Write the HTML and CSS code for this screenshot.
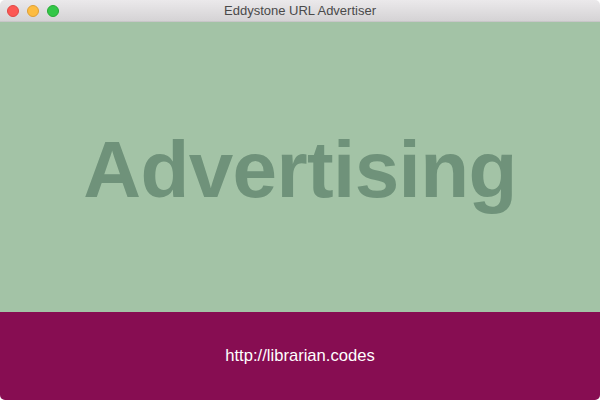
FILE: index.html
```html
<!DOCTYPE html>
<html>
<head>
<meta charset="utf-8">
<link rel="stylesheet" href="styles.css">
</head>
<body>
<div class="window">
  <div class="titlebar">
    <div class="lights">
      <span class="light close"></span>
      <span class="light min"></span>
      <span class="light max"></span>
    </div>
    <div class="title">Eddystone URL Advertiser</div>
  </div>
  <div class="status">
    <div class="status-text">Advertising</div>
  </div>
  <div class="footer">
    <div class="url">http://librarian.codes</div>
  </div>
</div>
</body>
</html>
```

FILE: styles.css
```css
html, body {
  margin: 0;
  padding: 0;
  background: #ffffff;
}
.window {
  width: 600px;
  height: 400px;
  display: flex;
  flex-direction: column;
  border-radius: 5px;
  overflow: hidden;
  font-family: "Liberation Sans", Arial, sans-serif;
}
.titlebar {
  height: 22px;
  flex: none;
  background: linear-gradient(#ebe9eb, #d5d3d5);
  border-bottom: 1px solid #c8c6c8;
  box-sizing: border-box;
  display: grid;
  grid-template-columns: 1fr;
  align-items: center;
  position: relative;
}
.lights {
  position: absolute;
  left: 7px;
  top: 5px;
  display: flex;
  gap: 8px;
}
.light {
  width: 12px;
  height: 12px;
  border-radius: 50%;
  box-sizing: border-box;
}
.close { background: #fc5753; border: 0.5px solid #df4744; }
.min { background: #fdbc40; border: 0.5px solid #de9f34; }
.max { background: #33c748; border: 0.5px solid #27aa35; }
.title {
  text-align: center;
  font-size: 13px;
  color: #4a4a4a;
  line-height: 21px;
  font-family: "Liberation Sans", Arial, sans-serif;
}
.status {
  flex: 1;
  background: #a3c3a6;
  display: flex;
  align-items: center;
  justify-content: center;
}
.status-text {
  font-size: 80px;
  font-weight: bold;
  letter-spacing: -0.6px;
  color: #6f927a;
  line-height: 1;
  margin-top: 6px;
}
.footer {
  height: 88px;
  flex: none;
  background: #870d52;
  display: flex;
  align-items: center;
  justify-content: center;
}
.url {
  color: #ffffff;
  font-size: 16.6px;
}
```
